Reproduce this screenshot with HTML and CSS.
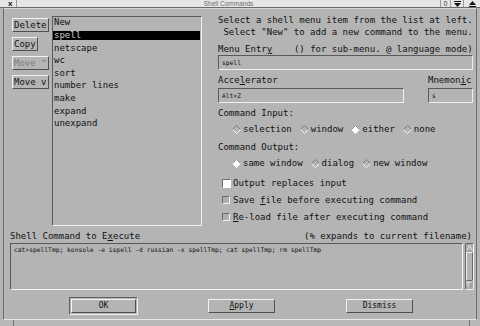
FILE: index.html
```html
<!DOCTYPE html>
<html>
<head>
<meta charset="utf-8">
<link rel="stylesheet" href="styles.css">
</head>
<body>
<div class="win">
  <div class="titlebar">
    <div class="tb-close">x</div>
    <div class="tb-title">Shell Commands</div>
    <div class="tb-btn tb-zero">0</div>
    <div class="tb-btn tb-down"><svg width="7" height="6" viewBox="0 0 7 6"><rect x="0" y="0" width="7" height="1" fill="#111"/><path d="M0 2 L7 2 L3.5 6 Z" fill="#111"/></svg></div>
    <div class="tb-btn tb-up"><svg width="7" height="6" viewBox="0 0 7 6"><path d="M3.5 0 L7 4 L0 4 Z" fill="#111"/><rect x="0" y="5" width="7" height="1" fill="#111"/></svg></div>
  </div>
  <div class="frame">
    <div class="top">
      <div class="btncol">
        <div class="btn">Delete</div>
        <div class="btn">Copy</div>
        <div class="btn disabled">Move ^</div>
        <div class="btn">Move v</div>
      </div>
      <div class="list">
        <div class="item">New</div>
        <div class="item sel">spell</div>
        <div class="item">netscape</div>
        <div class="item">wc</div>
        <div class="item">sort</div>
        <div class="item">number lines</div>
        <div class="item">make</div>
        <div class="item">expand</div>
        <div class="item">unexpand</div>
      </div>
      <div class="right">
        <div class="desc">Select a shell menu item from the list at left.</div>
        <div class="desc"> Select "New" to add a new command to the menu.</div>
        <div class="label menu-label">Menu Entr<u>y</u>    () for sub-menu. @ language mode)</div>
        <div class="field">spell</div>
        <div class="accrow">
          <div class="acc-col">
            <div class="label">Acce<u>l</u>erator</div>
            <div class="field">Alt+Z</div>
          </div>
          <div class="mn-col">
            <div class="label">Mnemon<u>i</u>c</div>
            <div class="field">s</div>
          </div>
        </div>
        <div class="label sect">Command Input:</div>
        <div class="radios">
          <div class="radio"><svg class="dia" width="9" height="9" viewBox="0 0 9 9"><path d="M0.5 4.5 L4.5 0.5 L8.5 4.5" stroke="#7a7a7a" fill="none"/><path d="M0.5 4.5 L4.5 8.5 L8.5 4.5" stroke="#f2f2f2" fill="none"/></svg>selection</div>
          <div class="radio"><svg class="dia" width="9" height="9" viewBox="0 0 9 9"><path d="M0.5 4.5 L4.5 0.5 L8.5 4.5" stroke="#7a7a7a" fill="none"/><path d="M0.5 4.5 L4.5 8.5 L8.5 4.5" stroke="#f2f2f2" fill="none"/></svg>window</div>
          <div class="radio"><svg class="dia" width="9" height="9" viewBox="0 0 9 9"><path d="M4.5 0 L9 4.5 L4.5 9 L0 4.5 Z" fill="#fff"/><path d="M0.5 4.5 L4.5 0.5 L8.5 4.5" stroke="#8a8a8a" fill="none"/></svg>either</div>
          <div class="radio"><svg class="dia" width="9" height="9" viewBox="0 0 9 9"><path d="M0.5 4.5 L4.5 0.5 L8.5 4.5" stroke="#7a7a7a" fill="none"/><path d="M0.5 4.5 L4.5 8.5 L8.5 4.5" stroke="#f2f2f2" fill="none"/></svg>none</div>
        </div>
        <div class="label sect2">Command Output:</div>
        <div class="radios">
          <div class="radio"><svg class="dia" width="9" height="9" viewBox="0 0 9 9"><path d="M4.5 0 L9 4.5 L4.5 9 L0 4.5 Z" fill="#fff"/><path d="M0.5 4.5 L4.5 0.5 L8.5 4.5" stroke="#8a8a8a" fill="none"/></svg>same window</div>
          <div class="radio"><svg class="dia" width="9" height="9" viewBox="0 0 9 9"><path d="M0.5 4.5 L4.5 0.5 L8.5 4.5" stroke="#7a7a7a" fill="none"/><path d="M0.5 4.5 L4.5 8.5 L8.5 4.5" stroke="#f2f2f2" fill="none"/></svg>dialog</div>
          <div class="radio"><svg class="dia" width="9" height="9" viewBox="0 0 9 9"><path d="M0.5 4.5 L4.5 0.5 L8.5 4.5" stroke="#7a7a7a" fill="none"/><path d="M0.5 4.5 L4.5 8.5 L8.5 4.5" stroke="#f2f2f2" fill="none"/></svg>new window</div>
        </div>
        <div class="check first"><span class="box on"></span>Output replaces input</div>
        <div class="check"><span class="box"></span>Save <u>f</u>ile before executing command</div>
        <div class="check"><span class="box"></span><u>R</u>e-load file after executing command</div>
      </div>
    </div>
    <div class="cmdhead">
      <span>Shell Command to E<u>x</u>ecute</span>
      <span>(% expands to current filename)</span>
    </div>
    <div class="cmdbox">
      <div class="cmdtext">cat&gt;spellTmp; konsole -e ispell -d russian -x spellTmp; cat spellTmp; rm spellTmp</div>
      <svg class="scroll" width="9" height="47" viewBox="0 0 9 47">
        <rect x="0" y="0" width="9" height="47" fill="#a9a9a9"/>
        <path d="M0.5 46.5 L0.5 0.5 L8.5 0.5" stroke="#6a6a6a" fill="none"/>
        <path d="M8.5 0.5 L8.5 46.5 L0.5 46.5" stroke="#f0f0f0" fill="none"/>
        <path d="M4.5 2 L7.5 8 L1.5 8 Z" fill="#b4b4b4" stroke="#f0f0f0" stroke-width="0.8"/>
        <path d="M1.5 8 L7.5 8" stroke="#6a6a6a" stroke-width="0.8"/>
        <rect x="1.5" y="9.5" width="6" height="28" fill="#b4b4b4" stroke="#f0f0f0"/>
        <path d="M7.5 9.5 L7.5 37.5 L1.5 37.5" stroke="#6a6a6a" fill="none"/>
        <path d="M1.5 39 L7.5 39 L4.5 45 Z" fill="#b4b4b4" stroke="#f0f0f0" stroke-width="0.8"/>
        <path d="M7.5 39 L4.5 45" stroke="#6a6a6a" stroke-width="0.8"/>
      </svg>
    </div>
    <div class="actions">
      <div class="defring"><div class="btn wide">OK</div></div>
      <div class="btn wide"><u>A</u>pply</div>
      <div class="btn wide dismiss">Dismiss</div>
    </div>
  </div>
  <div class="bottomstrip">
    <span class="tick t1"></span>
    <span class="tick t2"></span>
  </div>
</div>
</body>
</html>
```
FILE: styles.css
```css
* { box-sizing: border-box; }
html, body { margin: 0; padding: 0; }
body {
  width: 480px;
  height: 326px;
  overflow: hidden;
  background: #b4b4b4;
  font-family: "DejaVu Sans Mono", "Liberation Mono", monospace;
  font-size: 9px;
  color: #111;
}
u { text-decoration: underline; text-underline-offset: 1px; }
.win { width: 480px; height: 326px; display: flex; flex-direction: column; }

/* title bar */
.titlebar {
  height: 8px;
  flex: none;
  background: #e6e6e6;
  border-bottom: 1px solid #6a6a6a;
  display: flex;
  font-family: "Liberation Sans", sans-serif;
}
.tb-close {
  width: 17px;
  border-right: 1px solid #9a9a9a;
  font-size: 8px;
  font-weight: bold;
  line-height: 7px;
  padding-left: 8px;
}
.tb-title {
  flex: 1;
  text-align: center;
  font-size: 6.5px;
  line-height: 7px;
  color: #6a6a6a;
}
.tb-btn {
  border-left: 1px solid #9a9a9a;
  display: flex;
  align-items: center;
  justify-content: center;
  font-size: 7px;
  line-height: 7px;
}
.tb-zero { width: 10px; color: #333; }
.tb-down { width: 13px; }
.tb-up { width: 17px; }

/* frame */
.frame {
  margin-left: 3px;
  width: 474px;
  height: 312px;
  flex: none;
  border-left: 1px solid #6c6c6c;
  border-top: 1px solid #d8d8d8;
  border-right: 1px solid #6c6c6c;
  border-bottom: 1px solid #e8e8e8;
  padding-top: 7px;
}
.top { display: flex; height: 210px; padding-left: 8px; }

.btn {
  border: 1px solid;
  border-color: #f2f2f2 #505050 #505050 #f2f2f2;
  height: 14px;
  line-height: 12px;
  padding: 0 1px;
  background: #b4b4b4;
  white-space: pre;
}
.btn.disabled { color: #7c7c7c; }
.btncol {
  width: 37px;
  display: flex;
  flex-direction: column;
  align-items: flex-start;
  gap: 5px;
  padding-top: 2px;
}

.list {
  width: 150px;
  margin-left: 3px;
  height: 210px;
  border: 1px solid;
  border-color: #5a5a5a #f0f0f0 #f0f0f0 #5a5a5a;
  padding-top: 1.4px;
}
.item {
  height: 9px;
  line-height: 9px;
  margin-bottom: 3.6px;
  margin-right: 1px;
  padding-left: 1px;
  white-space: pre;
}
.item.sel { background: #000; color: #cfcfcf; }

.right { margin-left: 16px; width: 255px; }
.desc { line-height: 12px; white-space: pre; }
.desc:first-child { margin-top: -2px; }
.label { line-height: 12px; white-space: pre; }
.menu-label { margin-top: 5px; }
.field {
  height: 15px;
  border: 1px solid;
  border-color: #5a5a5a #f0f0f0 #f0f0f0 #5a5a5a;
  font-size: 6.3px;
  line-height: 13px;
  padding-left: 3px;
}
.accrow { display: flex; margin-top: 4px; }
.accrow .field { margin-top: 2px; }
.acc-col { width: 186px; }
.mn-col { width: 45px; margin-left: 24px; }
.mn-col .label { margin-left: 0; }

.sect { margin-top: 4px; }
.sect2 { margin-top: 6px; }
.radios {
  display: flex;
  gap: 8px;
  height: 12px;
  margin-top: 4px;
  padding-left: 14px;
  align-items: center;
}
.radio { display: flex; align-items: center; line-height: 12px; }
.dia { margin-right: 2px; flex: none; }

.check {
  display: flex;
  align-items: center;
  height: 12px;
  line-height: 12px;
  margin-top: 5px;
  padding-left: 4px;
  white-space: pre;
}
.check.first { margin-top: 8px; }
.box {
  width: 8px;
  height: 8px;
  margin-right: 3px;
  border: 1px solid;
  border-color: #6a6a6a #f0f0f0 #f0f0f0 #6a6a6a;
  background: #b0b0b0;
  flex: none;
}
.box.on {
  width: 9px;
  height: 9px;
  margin-right: 2px;
  background: #fff;
  border-color: #6a6a6a #fff #fff #6a6a6a;
}

.cmdhead {
  display: flex;
  justify-content: space-between;
  margin-top: 4px;
  line-height: 12px;
  padding: 0 4px 0 6px;
  white-space: pre;
}
.cmdbox {
  display: flex;
  gap: 2px;
  margin-top: 1px;
  height: 47px;
  padding-left: 6px;
}
.cmdtext {
  width: 453px;
  height: 47px;
  border: 1px solid;
  border-color: #5a5a5a #f4f4f4 #f4f4f4 #5a5a5a;
  font-size: 6.3px;
  line-height: 8px;
  padding: 2px 0 0 3px;
  white-space: pre;
  overflow: hidden;
}
.scroll { flex: none; }

.actions {
  display: flex;
  align-items: center;
  gap: 70px;
  margin-top: 7px;
  height: 18px;
  padding-left: 65px;
}
.defring {
  border: 1px solid;
  border-color: #606060 #f0f0f0 #f0f0f0 #606060;
  padding: 1px;
  width: 69px;
  height: 18px;
}
.btn.wide {
  width: 67px;
  text-align: center;
  font-size: 8px;
}
.defring .btn.wide { width: 65px; }
.dismiss { margin-left: 1px; }

.bottomstrip {
  flex: 1;
  position: relative;
  background: #b8b8b8;
}
.tick {
  position: absolute;
  top: 0;
  width: 1px;
  height: 6px;
  background: #707070;
}
.t1 { left: 13px; }
.t2 { left: 469px; }
```
